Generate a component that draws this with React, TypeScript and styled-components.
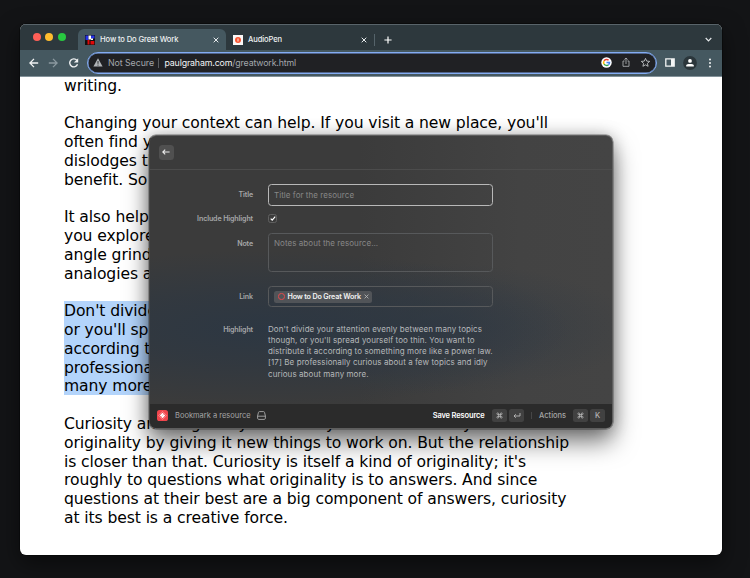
import React from "react";
import styled, { createGlobalStyle } from "styled-components";

const GlobalStyle = createGlobalStyle`
  * { box-sizing: border-box; }
  html, body { margin: 0; padding: 0; }
  body { width: 750px; height: 578px; overflow: hidden; background: #131416; }
`;

const Desktop = styled.div`
  position: relative;
  width: 750px;
  height: 578px;
  padding: 24px 28px 24px 20px;
  background: #131416;
  font-family: Inter, sans-serif;
  overflow: hidden;
`;

const BrowserWindow = styled.div`
  width: 702px;
  height: 530.5px;
  display: flex;
  flex-direction: column;
  border-radius: 6px;
  overflow: hidden;
  background: #fff;
  box-shadow: 0 0 0 0.5px #050606, 0 8px 22px rgba(0, 0, 0, 0.5);
`;

const TabStrip = styled.div`
  height: 26px;
  flex: none;
  display: flex;
  align-items: flex-end;
  background: #2d383d;
  border-top: 1px solid #59646a;
`;

const Lights = styled.div`
  display: flex;
  gap: 4.4px;
  width: 58px;
  height: 25px;
  align-items: center;
  padding: 0 0 1.4px 13px;
`;

const Light = styled.span<{ $color: string }>`
  width: 8px;
  height: 8px;
  border-radius: 50%;
  background: ${(p) => p.$color};
`;

const Tab = styled.div<{ $active?: boolean; $width: number }>`
  width: ${(p) => p.$width}px;
  height: 21px;
  display: flex;
  align-items: center;
  padding: 0 7px;
  gap: 5px;
  border-radius: 6px 6px 0 0;
  background: ${(p) => (p.$active ? "#455860" : "transparent")};
  color: #eef1f2;
`;

const TabTitle = styled.span`
  flex: 1;
  font-size: 7.6px;
  line-height: 10px;
  font-weight: 500;
  white-space: nowrap;
  letter-spacing: -0.12px;
`;

const TabDivider = styled.span`
  width: 1px;
  height: 12px;
  margin-bottom: 4px;
  background: #55636a;
`;

const StripIcon = styled.span<{ $left: string }>`
  display: flex;
  height: 21px;
  align-items: center;
  margin-left: ${(p) => p.$left};
`;

const Toolbar = styled.div`
  height: 26.5px;
  flex: none;
  display: flex;
  align-items: center;
  background: #455860;
  border-bottom: 1px solid #83929a;
  padding: 0 7px 0 9px;
`;

const NavButtons = styled.div`
  width: 58px;
  flex: none;
  display: flex;
  gap: 9px;
`;

const AddressBar = styled.div`
  width: 569.5px;
  flex: none;
  height: 22px;
  display: flex;
  align-items: center;
  border: 1.5px solid #83acf3;
  border-radius: 11px;
  background: #202124;
  box-shadow: inset 0 0 0 0.4px #83acf3;
  padding: 0 5px 0 5px;
  font-size: 8.8px;
  color: #a3a7ab;
  white-space: nowrap;
`;

const NotSecure = styled.span`
  margin-left: 5px;
  letter-spacing: -0.06px;
`;

const AddressDivider = styled.span`
  width: 1px;
  height: 10px;
  margin: 0 5.5px 0 4px;
  background: #5a5d61;
`;

const Url = styled.span`
  flex: 1;
  letter-spacing: -0.14px;
`;

const Domain = styled.span`
  color: #f1f3f4;
`;

const AddressIcons = styled.div`
  display: flex;
  align-items: center;
  gap: 9px;
`;

const ToolIcons = styled.div`
  flex: 1;
  display: flex;
  align-items: center;
  padding-left: 8px;
  gap: 8px;
`;

const Article = styled.div`
  flex: 1;
  min-height: 0;
  overflow: hidden;
  padding: 0.2px 0 0 44px;
  font-family: "DejaVu Sans", Verdana, sans-serif;
  font-size: 15.6px;
  color: #000;
`;

const Paragraph = styled.div<{ $selected?: boolean }>`
  margin-bottom: 18.8px;
  width: ${(p) => (p.$selected ? "505px" : "auto")};
  background: ${(p) =>
    p.$selected ? "linear-gradient(#b3d4fb, #b3d4fb) 0 0 / 100% calc(100% - 1px) no-repeat" : "transparent"};
  box-shadow: ${(p) => (p.$selected ? "0 -1px 0 #b3d4fb" : "none")};
`;

const Line = styled.div`
  height: 18.8px;
  line-height: 18.8px;
  white-space: nowrap;
  letter-spacing: -0.1px;
`;

const Dialog = styled.div`
  position: absolute;
  left: 149px;
  top: 134.5px;
  width: 464px;
  height: 294px;
  display: flex;
  flex-direction: column;
  border: 1px solid #5e5e5e;
  border-left-color: #484848;
  border-radius: 7px;
  overflow: hidden;
  background:
    radial-gradient(ellipse 310px 78px at 24% 66%, rgba(44, 55, 67, 0.95) 0%, rgba(45, 55, 66, 0.65) 45%, rgba(62, 63, 64, 0) 100%),
    radial-gradient(ellipse 200px 66px at 62% 66%, rgba(46, 57, 69, 0.7) 0%, rgba(46, 57, 69, 0.35) 50%, rgba(62, 63, 64, 0) 100%),
    linear-gradient(90deg, #3b3b3b 0%, #3b3b3b 45%, #434343 80%, #444 100%);
  box-shadow: 0 0 0 0.5px rgba(0, 0, 0, 0.45), 0 13px 25px rgba(0, 0, 0, 0.52), 0 0 16px rgba(0, 0, 0, 0.25);
`;

const DialogHeader = styled.div`
  height: 34px;
  flex: none;
  display: flex;
  align-items: center;
  padding: 0 8.5px;
  border-bottom: 1px solid #4c4c4c;
`;

const BackButton = styled.div`
  width: 15px;
  height: 15px;
  display: grid;
  place-items: center;
  border-radius: 3.5px;
  background: #505050;
`;

const Form = styled.div`
  flex: 1;
  padding-top: 14.5px;
`;

const Field = styled.div<{ $height: number; $gap: number }>`
  display: grid;
  grid-template-columns: 103px 225px;
  column-gap: 15px;
  height: ${(p) => p.$height}px;
  margin-bottom: ${(p) => p.$gap}px;
`;

const Label = styled.div<{ $line: number }>`
  text-align: right;
  font-size: 7.1px;
  font-weight: 600;
  letter-spacing: -0.12px;
  line-height: ${(p) => p.$line}px;
  color: #a6a7a8;
  white-space: nowrap;
`;

const InputBox = styled.div<{ $focus?: boolean; $line: number }>`
  display: flex;
  height: 100%;
  border: 1px solid ${(p) => (p.$focus ? "#b8b8b8" : "#57595b")};
  border-radius: 3.5px;
  padding: 0 5px;
  font-size: 8px;
  letter-spacing: 0.05px;
  line-height: ${(p) => p.$line}px;
  color: #878787;
`;

const Checkbox = styled.div`
  width: 9px;
  height: 9px;
  display: grid;
  place-items: center;
  border: 0.8px solid #606060;
  border-radius: 2.5px;
`;

const Tag = styled.div`
  width: 98px;
  height: 12px;
  align-self: center;
  display: flex;
  align-items: center;
  gap: 3px;
  padding: 0 3.5px 0 4px;
  border-radius: 2.5px;
  background: #515458;
  color: #f2f2f2;
  font-size: 7.2px;
  font-weight: 600;
  letter-spacing: -0.17px;
  line-height: 13px;
  white-space: nowrap;

  svg {
    flex: none;
  }
`;

const TagRing = styled.span`
  width: 6.5px;
  height: 6.5px;
  flex: none;
  border: 1px solid #e5484d;
  border-radius: 50%;
`;

const HighlightText = styled.div`
  font-size: 8px;
  line-height: 11.15px;
  padding-top: 0.4px;
  letter-spacing: 0.08px;
  color: #b6b8ba;
  white-space: nowrap;
`;

const DialogFooter = styled.div`
  height: 24px;
  flex: none;
  display: flex;
  align-items: center;
  padding: 0 7px;
  background: #2b2b2b;
  font-size: 7.5px;
  color: #a5a5a5;
  white-space: nowrap;
`;

const AppName = styled.span`
  margin: 0 6px 0 7px;
`;

const Spacer = styled.span`
  flex: 1;
`;

const Action = styled.span<{ $primary?: boolean }>`
  margin-right: ${(p) => (p.$primary ? 6 : 5.5)}px;
  font-size: 7.5px;
  letter-spacing: ${(p) => (p.$primary ? -0.14 : 0)}px;
  font-weight: ${(p) => (p.$primary ? 600 : 500)};
  color: ${(p) => (p.$primary ? "#fff" : "#a5a5a5")};
`;

const Key = styled.span`
  width: 15px;
  height: 13px;
  margin-left: 1.7px;
  display: grid;
  place-items: center;
  border-radius: 2.5px;
  background: #414141;
  color: #b5b5b5;
  font-size: 7.5px;
  font-weight: 500;
`;

const FooterDivider = styled.span`
  width: 1px;
  height: 7px;
  margin: 0 7px;
  background: #464646;
`;

const CloseIcon = ({ size = 6, color = "#e8ecee" }: { size?: number; color?: string }) => (
  <svg width={size} height={size} viewBox="0 0 6 6" stroke={color} strokeWidth="1">
    <path d="M.7.7l4.6 4.6M5.3.7L.7 5.3" />
  </svg>
);

const CommandIcon = () => (
  <svg width="7" height="7" viewBox="0 0 24 24" fill="none" stroke="#bbb" strokeWidth="2.6">
    <path d="M15 6v12a3 3 0 1 0 3-3H6a3 3 0 1 0 3 3V6a3 3 0 1 0-3 3h12a3 3 0 1 0-3-3" />
  </svg>
);

const ArrowIcon = ({ color, flip }: { color: string; flip?: boolean }) => (
  <svg width="10" height="10" viewBox="0 0 10 10" fill="none" stroke={color} strokeWidth="1.3">
    <path d={flip ? "M.8 5H9M5 .9L9.1 5 5 9.1" : "M9.2 5H1M5 .9L.9 5 5 9.1"} />
  </svg>
);

const paragraphs: { selected?: boolean; lines: string[] }[] = [
  { lines: ["writing."] },
  {
    lines: [
      "Changing your context can help. If you visit a new place, you'll",
      "often find y",
      "dislodges th",
      "benefit. So",
    ],
  },
  {
    lines: ["It also help", "you explore", "angle grind", "analogies a"],
  },
  {
    selected: true,
    lines: ["Don't divide", "or you'll sp", "according t", "professiona", "many more"],
  },
  {
    lines: [
      "Curiosity and originality are closely related. Curiosity feeds",
      "originality by giving it new things to work on. But the relationship",
      "is closer than that. Curiosity is itself a kind of originality; it's",
      "roughly to questions what originality is to answers. And since",
      "questions at their best are a big component of answers, curiosity",
      "at its best is a creative force.",
    ],
  },
];

export default function App() {
  return (
    <Desktop>
      <GlobalStyle />
      <BrowserWindow>
        <TabStrip>
          <Lights>
            <Light $color="#ff5f57" />
            <Light $color="#febc2e" />
            <Light $color="#28c840" />
          </Lights>
          <Tab $active $width={148}>
            <svg width="10" height="10" viewBox="0 0 10 10">
              <path fill="#111" d="M0 0h10v10H0z" />
              <path fill="#2432e8" d="M.5.5h3V5h-3zM6 .5h3.5v3H6z" />
              <path fill="#fff" d="M3.5.5H6v4H3.5zM6 3.5h2V5H6z" />
              <path fill="#e00808" d="M2.5 5h2v4.5h-2zM5.5 6h3.8v3.5H5.5z" />
            </svg>
            <TabTitle>How to Do Great Work</TabTitle>
            <CloseIcon />
          </Tab>
          <Tab $width={148}>
            <svg width="10" height="10" viewBox="0 0 10 10">
              <path fill="#faf7f6" d="M0 0h10v10H0z" />
              <circle cx="5" cy="5" r="3" fill="#fa5430" />
              <path d="M5 3.5v3" stroke="#fff" strokeWidth=".9" />
            </svg>
            <TabTitle>AudioPen</TabTitle>
            <CloseIcon />
          </Tab>
          <TabDivider />
          <StripIcon $left="8.5px">
            <svg width="8" height="8" viewBox="0 0 8 8" stroke="#fff" strokeWidth="1.2">
              <path d="M4 .4v7.2M.4 4h7.2" />
            </svg>
          </StripIcon>
          <StripIcon $left="313.5px">
            <svg width="7" height="5" viewBox="0 0 7 5" fill="none" stroke="#e4e8ea" strokeWidth="1.2">
              <path d="M.7 1l2.8 2.8L6.3 1" />
            </svg>
          </StripIcon>
        </TabStrip>
        <Toolbar>
          <NavButtons>
            <ArrowIcon color="#f0f2f3" />
            <ArrowIcon color="#8a989f" flip />
            <svg width="13" height="10" viewBox="0 0 13 10">
              <path d="M9.9 2.4A4 4 0 1 0 10.5 6.2" fill="none" stroke="#f0f2f3" strokeWidth="1.4" />
              <path d="M11.2.3v4.3H6.9z" fill="#f0f2f3" />
            </svg>
          </NavButtons>
          <AddressBar>
            <svg width="10" height="9" viewBox="0 0 10 9">
              <path d="M5 .3L9.6 8.5H.4z" fill="#b1b4b7" />
              <path d="M5 3v2.8M5 6.6v1" stroke="#202124" strokeWidth=".9" />
            </svg>
            <NotSecure>Not Secure</NotSecure>
            <AddressDivider />
            <Url>
              <Domain>paulgraham.com</Domain>/greatwork.html
            </Url>
            <AddressIcons>
              <svg width="11" height="11" viewBox="0 0 11 11" fill="none" strokeWidth="1.5">
                <circle cx="5.5" cy="5.5" r="5.2" fill="#fff" />
                <path stroke="#ea4335" d="M3.1 3.9a3 3 0 0 1 4.5-.6" />
                <path stroke="#fbbc05" d="M3.1 3.9a3 3 0 0 0 0 3.2" />
                <path stroke="#34a853" d="M3.1 7.1a3 3 0 0 0 4.4.6" />
                <path stroke="#4285f4" d="M5.5 5.5h3a3 3 0 0 1-1 2.2" />
              </svg>
              <svg width="10" height="11" viewBox="0 0 10 11" fill="none" stroke="#a9acaf" strokeWidth=".9">
                <path d="M3.5 4H2v5.3h6V4H6.5M5 7V1M3.4 2.5L5 1l1.6 1.5" />
              </svg>
              <svg width="11" height="11" viewBox="0 0 11 11" fill="none" stroke="#c1c4c6" strokeWidth=".9">
                <path d="M5.5 1.4l1.2 2.7 3 .3-2.3 2 .7 2.9-2.6-1.5-2.6 1.5.7-2.9-2.3-2 3-.3z" />
              </svg>
            </AddressIcons>
          </AddressBar>
          <ToolIcons>
            <svg width="10" height="9" viewBox="0 0 10 9">
              <path d="M.8.8h8.4v7.4H.8z" fill="none" stroke="#f3f5f5" strokeWidth="1.3" />
              <path d="M6 1h3v7H6z" fill="#f3f5f5" />
            </svg>
            <svg width="14" height="14" viewBox="0 0 14 14">
              <circle cx="7" cy="7" r="6.9" fill="#2b363b" />
              <circle cx="7" cy="4.9" r="1.9" fill="#fff" />
              <path d="M3.2 10.5V9.4C3.2 7.5 10.8 7.5 10.8 9.4v1.1z" fill="#fff" />
            </svg>
            <svg width="10" height="10" viewBox="0 0 10 10" fill="#f3f5f5">
              <circle cx="5" cy="1.6" r="1" />
              <circle cx="5" cy="5" r="1" />
              <circle cx="5" cy="8.4" r="1" />
            </svg>
          </ToolIcons>
        </Toolbar>
        <Article>
          {paragraphs.map((p, i) => (
            <Paragraph key={i} $selected={p.selected}>
              {p.lines.map((text) => (
                <Line key={text}>{text}</Line>
              ))}
            </Paragraph>
          ))}
        </Article>
      </BrowserWindow>

      <Dialog>
        <DialogHeader>
          <BackButton>
            <svg width="8" height="6" viewBox="0 0 8 6" fill="none" stroke="#ececec" strokeWidth="1.1">
              <path d="M7.6 3H.9M3.2 .6L.8 3l2.4 2.4" />
            </svg>
          </BackButton>
        </DialogHeader>
        <Form>
          <Field $height={20} $gap={9.5}>
            <Label $line={22}>Title</Label>
            <InputBox $focus $line={20}>Title for the resource</InputBox>
          </Field>
          <Field $height={9} $gap={10}>
            <Label $line={9}>Include Highlight</Label>
            <Checkbox>
              <svg width="6" height="5" viewBox="0 0 6 5" fill="none" stroke="#fff" strokeWidth="1.2">
                <path d="M.7 2.6l1.5 1.5L5.2.7" />
              </svg>
            </Checkbox>
          </Field>
          <Field $height={39.5} $gap={14}>
            <Label $line={21}>Note</Label>
            <InputBox $line={18}>Notes about the resource...</InputBox>
          </Field>
          <Field $height={20} $gap={17.5}>
            <Label $line={21}>Link</Label>
            <InputBox $line={18}>
              <Tag>
                <TagRing />
                How to Do Great Work
                <CloseIcon size={5} color="#b9b9b9" />
              </Tag>
            </InputBox>
          </Field>
          <Field $height={56} $gap={0}>
            <Label $line={12}>Highlight</Label>
            <HighlightText>
              Don't divide your attention evenly between many topics<br />
              though, or you'll spread yourself too thin. You want to<br />
              distribute it according to something more like a power law.<br />
              [17] Be professionally curious about a few topics and idly<br />
              curious about many more.
            </HighlightText>
          </Field>
        </Form>
        <DialogFooter>
          <svg width="11" height="11" viewBox="0 0 11 11">
            <rect width="11" height="11" rx="2.6" fill="#ef454c" />
            <path d="M5.5 1.4l4.1 4.1-4.1 4.1-4.1-4.1z" fill="none" stroke="#ff9a9d" strokeWidth=".7" />
            <path d="M5.5 2.8l2.7 2.7-2.7 2.7-2.7-2.7z" fill="#fff" />
            <path d="M4 7l3-3" stroke="#f58e92" strokeWidth=".5" />
          </svg>
          <AppName>Bookmark a resource</AppName>
          <svg width="9" height="9" viewBox="0 0 9 9" fill="none" stroke="#aaa" strokeWidth=".9">
            <path d="M.6 5L1.4 1.6C1.5 1 1.8.6 2.5.6h4c.7 0 1 .4 1.1 1L8.4 5v2.2c0 .7-.5 1.2-1.2 1.2H1.8C1.1 8.4.6 7.9.6 7.2zM.6 5.2h7.8" />
          </svg>
          <Spacer />
          <Action $primary>Save Resource</Action>
          <Key><CommandIcon /></Key>
          <Key>
            <svg width="8" height="7" viewBox="0 0 8 7" fill="none" stroke="#bbb" strokeWidth=".9">
              <path d="M7 1v3H1M2.8 2.2L1 4l1.8 1.8" />
            </svg>
          </Key>
          <FooterDivider />
          <Action>Actions</Action>
          <Key><CommandIcon /></Key>
          <Key>K</Key>
        </DialogFooter>
      </Dialog>
    </Desktop>
  );
}
